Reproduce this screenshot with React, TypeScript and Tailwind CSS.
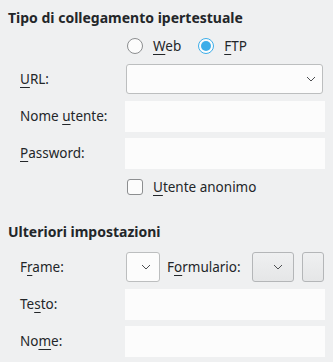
import React from 'react'

function Chevron() {
  return (
    <svg width="10" height="6" viewBox="0 0 10 6" className="shrink-0">
      <path d="M1 1 L5 5 L9 1" fill="none" stroke="#4d4f52" strokeWidth="1" />
    </svg>
  )
}

function U({ children }: { children: React.ReactNode }) {
  return <span className="underline underline-offset-[3px] decoration-1">{children}</span>
}

function Label({ children }: { children: React.ReactNode }) {
  return <div className="w-[105px] pl-[12px] text-[13.5px] text-[#232629] shrink-0">{children}</div>
}

function TextField() {
  return <div className="flex-1 h-[31px] bg-[#fcfcfc]" />
}

export default function App() {
  return (
    <div
      className="w-[333px] h-[362px] bg-[#eff0f1] text-[#232629] flex flex-col pl-[8px] pr-[8px]"
      style={{ fontFamily: '"Noto Sans", sans-serif' }}
    >
      {/* link type */}
      <div className="mt-[8px] h-[19px] leading-[19px] text-[14px] font-bold">
        Tipo di collegamento ipertestuale
      </div>

      <div className="mt-[11px] h-[16px] flex items-center pl-[119px] text-[13.5px]">
        <div className="w-[16px] h-[16px] rounded-full border border-[#8c8e90] bg-[#fcfcfc]" />
        <span className="ml-[10px]">
          <U>W</U>eb
        </span>
        <div className="ml-[17px] w-[16px] h-[16px] rounded-full border border-[#3daee9] bg-[#fcfcfc] flex items-center justify-center">
          <div className="w-[10px] h-[10px] rounded-full bg-[#3daee9]" />
        </div>
        <span className="ml-[10px]">
          <U>F</U>TP
        </span>
      </div>

      <div className="mt-[10px] flex items-center">
        <Label>
          <U>U</U>RL:
        </Label>
        <div className="ml-[13px] flex-1 mr-[2px] h-[30px] rounded-[3px] border border-[#bcbebf] bg-[#fcfcfc] flex items-center justify-end pr-[6px]">
          <Chevron />
        </div>
      </div>

      <div className="mt-[7px] flex items-center">
        <Label>
          Nome <U>u</U>tente:
        </Label>
        <div className="ml-[12px] flex-1 flex">
          <TextField />
        </div>
      </div>

      <div className="mt-[6px] flex items-center">
        <Label>
          <U>P</U>assword:
        </Label>
        <div className="ml-[12px] flex-1 flex">
          <TextField />
        </div>
      </div>

      <div className="mt-[10px] h-[16px] flex items-center pl-[119px] text-[13.5px]">
        <div className="w-[16px] h-[16px] rounded-[3px] border border-[#8c8e90] bg-[#fcfcfc]" />
        <span className="ml-[10px]">
          <U>U</U>tente anonimo
        </span>
      </div>

      {/* more settings */}
      <div className="mt-[27px] h-[19px] leading-[19px] text-[14px] font-bold">Ulteriori impostazioni</div>

      <div className="mt-[11px] flex items-center">
        <Label>
          F<U>r</U>ame:
        </Label>
        <div className="ml-[13px] w-[34px] h-[30px] rounded-[3px] border border-[#bcbebf] bg-[#fcfcfc] flex items-center justify-end pr-[8px]">
          <Chevron />
        </div>
        <span className="ml-[7px] text-[13.5px]">
          F<U>o</U>rmulario:
        </span>
        <div className="ml-auto w-[42px] h-[30px] rounded-[3px] border border-[#b4b6b8] bg-gradient-to-b from-[#eff0f1] to-[#e5e6e7] flex items-center justify-end pr-[10px]">
          <Chevron />
        </div>
        <div className="ml-[8px] mr-[1px] w-[22px] h-[30px] rounded-[3px] border border-[#b4b6b8] bg-gradient-to-b from-[#eff0f1] to-[#e5e6e7]" />
      </div>

      <div className="mt-[7px] flex items-center">
        <Label>
          Te<U>s</U>to:
        </Label>
        <div className="ml-[12px] flex-1 flex">
          <TextField />
        </div>
      </div>

      <div className="mt-[6px] flex items-center">
        <Label>
          No<U>m</U>e:
        </Label>
        <div className="ml-[12px] flex-1 flex">
          <TextField />
        </div>
      </div>
    </div>
  )
}
